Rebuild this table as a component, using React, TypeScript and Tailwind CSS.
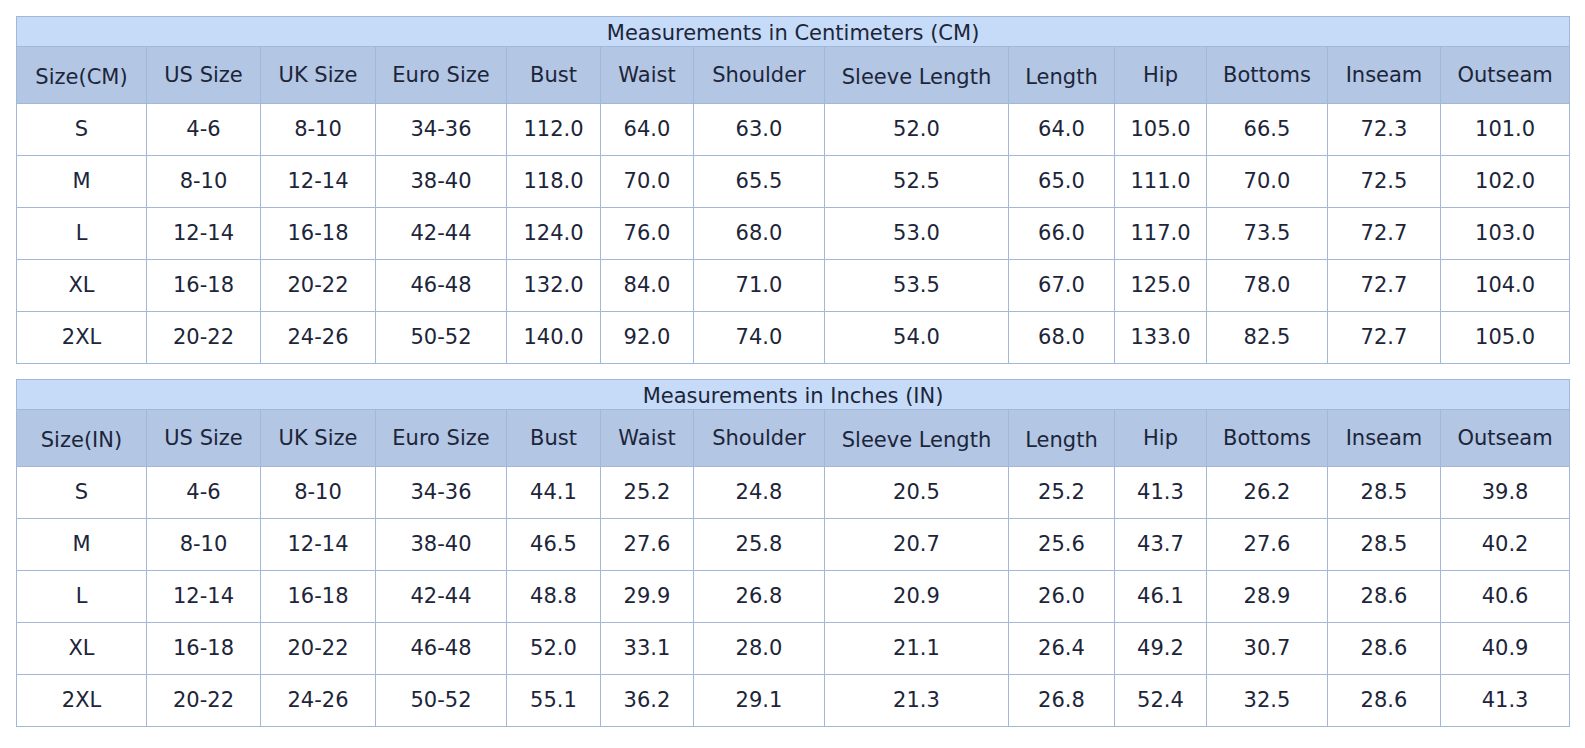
import React from "react";

const headers = [
  "US Size",
  "UK Size",
  "Euro Size",
  "Bust",
  "Waist",
  "Shoulder",
  "Sleeve Length",
  "Length",
  "Hip",
  "Bottoms",
  "Inseam",
  "Outseam",
];

// these header cells sit a few pixels lower in the original
const lowHeaders = ["Sleeve Length", "Length"];

const widths = [130, 114, 115, 131, 94, 93, 131, 184, 106, 92, 121, 113, 129];

const cmRows = [
  ["S", "4-6", "8-10", "34-36", "112.0", "64.0", "63.0", "52.0", "64.0", "105.0", "66.5", "72.3", "101.0"],
  ["M", "8-10", "12-14", "38-40", "118.0", "70.0", "65.5", "52.5", "65.0", "111.0", "70.0", "72.5", "102.0"],
  ["L", "12-14", "16-18", "42-44", "124.0", "76.0", "68.0", "53.0", "66.0", "117.0", "73.5", "72.7", "103.0"],
  ["XL", "16-18", "20-22", "46-48", "132.0", "84.0", "71.0", "53.5", "67.0", "125.0", "78.0", "72.7", "104.0"],
  ["2XL", "20-22", "24-26", "50-52", "140.0", "92.0", "74.0", "54.0", "68.0", "133.0", "82.5", "72.7", "105.0"],
];

const inRows = [
  ["S", "4-6", "8-10", "34-36", "44.1", "25.2", "24.8", "20.5", "25.2", "41.3", "26.2", "28.5", "39.8"],
  ["M", "8-10", "12-14", "38-40", "46.5", "27.6", "25.8", "20.7", "25.6", "43.7", "27.6", "28.5", "40.2"],
  ["L", "12-14", "16-18", "42-44", "48.8", "29.9", "26.8", "20.9", "26.0", "46.1", "28.9", "28.6", "40.6"],
  ["XL", "16-18", "20-22", "46-48", "52.0", "33.1", "28.0", "21.1", "26.4", "49.2", "30.7", "28.6", "40.9"],
  ["2XL", "20-22", "24-26", "50-52", "55.1", "36.2", "29.1", "21.3", "26.8", "52.4", "32.5", "28.6", "41.3"],
];

function SizeTable({ title, unit, rows }: { title: string; unit: string; rows: string[][] }) {
  return (
    <table className="w-[1553px] table-fixed border-collapse border border-[#a3b8d8] text-center">
      <colgroup>
        {widths.map((w, i) => (
          <col key={i} style={{ width: w }} />
        ))}
      </colgroup>
      <tbody>
        <tr className="h-[30px] bg-[#c6dbf7]">
          <td colSpan={13} className="border border-[#a3b8d8] p-0 pt-[3px] leading-[25px]">
            {title}
          </td>
        </tr>
        <tr className="h-[57px] bg-[#b3c6e4]">
          <td className="border border-[#a3b8d8] p-0 pt-[5px]">Size({unit})</td>
          {headers.map((h) => (
            <td
              key={h}
              className={
                lowHeaders.includes(h)
                  ? "border border-[#a3b8d8] p-0 pt-[5px]"
                  : "border border-[#a3b8d8] p-0"
              }
            >
              {h}
            </td>
          ))}
        </tr>
        {rows.map((r) => (
          <tr key={r[0]} className="h-[52px]">
            {r.map((c, i) => (
              <td key={i} className="border border-[#a3b8d8] p-0">
                {c}
              </td>
            ))}
          </tr>
        ))}
      </tbody>
    </table>
  );
}

export default function App() {
  return (
    <div className="min-h-screen bg-white px-4 py-4 font-['DejaVu_Sans',sans-serif] text-[21px] leading-[25px] text-[#1c2539]">
      <div className="flex flex-col gap-[15px]">
        <SizeTable title="Measurements in Centimeters (CM)" unit="CM" rows={cmRows} />
        <SizeTable title="Measurements in Inches (IN)" unit="IN" rows={inRows} />
      </div>
    </div>
  );
}
